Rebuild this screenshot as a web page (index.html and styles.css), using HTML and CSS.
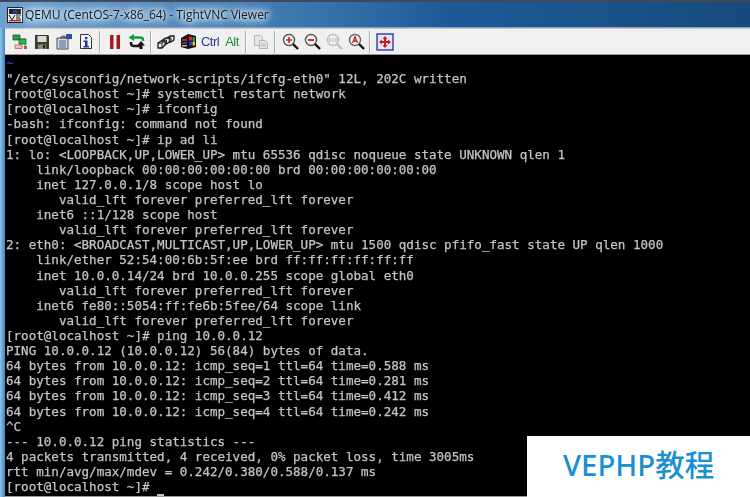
FILE: index.html
```html
<!DOCTYPE html>
<html lang="en">
<head>
<meta charset="utf-8">
<title>QEMU (CentOS-7-x86_64) - TightVNC Viewer</title>
<link rel="stylesheet" href="styles.css">
</head>
<body>
<div class="window">
  <header class="titlebar">
    <svg class="app-icon" width="16" height="16" viewBox="0 0 16 16">
      <rect x=".5" y=".5" width="15" height="15" fill="#e8e8e8" stroke="#222"/>
      <rect x="2" y="2" width="12" height="5" fill="#222"/>
      <rect x="6" y="3" width="4" height="3" fill="#2438c8"/>
      <path d="M2 8l3 5 3-5M9 8h5M9 10h4M9 12h5" stroke="#222" fill="none"/>
      <rect x="2" y="13" width="12" height="1.5" fill="#c03030"/>
    </svg>
    <span class="title-text">QEMU (CentOS-7-x86_64) - TightVNC Viewer</span>
  </header>
  <div class="client">
    <nav class="toolbar">
      <span class="tool"><svg width="16" height="16" viewBox="0 0 16 16"><path d="M3 5h10v7" fill="none" stroke="#8a8a40"/><rect x="1" y="1" width="7" height="5" fill="#19a83a" stroke="#222" stroke-width=".6"/><rect x="7" y="5" width="7" height="5" fill="#22c048" stroke="#222" stroke-width=".6"/><rect x="3" y="11" width="7" height="3.5" fill="#e8c8c0" stroke="#c03030" stroke-width=".6"/><rect x="12" y="12" width="3" height="3" fill="#77773a"/></svg></span>
      <span class="tool"><svg width="16" height="16" viewBox="0 0 16 16"><path d="M1 1h13l1 1v13H1z" fill="#3d3d2e"/><rect x="3.5" y="2" width="9" height="6" fill="#dcdcd2"/><rect x="4" y="10.5" width="8" height="4.5" fill="#8b8b6e"/><rect x="9" y="11" width="2" height="3.5" fill="#222"/></svg></span>
      <span class="tool"><svg width="17" height="17" viewBox="0 0 17 17"><path d="M1 5h11v11H1z" fill="#dcdce0" stroke="#444"/><path d="M3 8h7M3 10h7M3 12h7M3 14h7" stroke="#3a5a90"/><path d="M4 5l2-2h3l1 2z" fill="#888" stroke="#333" stroke-width=".6"/><rect x="10" y="1" width="6" height="5" fill="#2a4fa8"/></svg></span>
      <span class="tool"><svg width="16" height="17" viewBox="0 0 16 17"><path d="M2.5 1.500h8l3 3v11h-11z" fill="#f6f6f6" stroke="#333"/><rect x="7" y="4" width="2.400" height="2.200" fill="#1c2fa8"/><path d="M5.500 7.500h4v5.500h1.500v1.500h-5.500v-1.500h1.500v-4h-1.500z" fill="#1c2fa8"/></svg></span>
      <i class="sep"></i>
      <span class="tool"><svg width="12" height="14" viewBox="0 0 12 14"><rect x="1" y="0" width="3.500" height="14" fill="#a51c1c"/><rect x="7.500" y="0" width="3.500" height="14" fill="#a51c1c"/></svg></span>
      <span class="tool"><svg width="18" height="16" viewBox="0 0 18 16"><path d="M15 7V5.500Q15 3.500 12 3.500H5" stroke="#149a3a" stroke-width="2.400" fill="none"/><path d="M0.500 3.500L6 0V7z" fill="#149a3a"/><path d="M3 8v1.500Q3 12 6 12H13" stroke="#111" stroke-width="2.400" fill="none"/><path d="M13 7l4 4.500h-2.500V15h-3V11.500H9z" fill="#111"/></svg></span>
      <i class="sep"></i>
      <span class="tool"><svg width="18" height="14" viewBox="0 0 18 14"><g fill="#ececec" stroke="#1a1a1a" stroke-width="1.300" stroke-linejoin="round"><path d="M10 3l3-2h4v4l-3 2h-4z"/><path d="M5.500 5l3-2h4v4l-3 2h-4z"/><path d="M1 8l3-2h4v4l-3 3H1z"/></g><path d="M1 8h4v5M5 8l3-2M5.500 5h4v4M10 3h4v4" stroke="#1a1a1a" fill="none"/></svg></span>
      <span class="tool"><svg width="17" height="17" viewBox="0 0 17 17"><path d="M1 5l7-4v15l-7-2z" fill="#111"/><path d="M2 6h5v2H2z" fill="#d02020"/><path d="M2 9h5v2H2z" fill="#2040c0"/><path d="M2 12h5v1.500H2z" fill="#d8c020"/><path d="M8 1l8 2v11l-8 2z" fill="#111"/><rect x="9" y="3.500" width="3" height="4" fill="#e02020"/><rect x="12.500" y="4" width="2.500" height="4" fill="#18a030"/><rect x="9" y="8.500" width="3" height="4" fill="#2040d0"/><rect x="12.500" y="8.500" width="2.500" height="4" fill="#e0c820"/></svg></span>
      <span class="tool key key-ctrl">Ctrl</span>
      <span class="tool key key-alt">Alt</span>
      <i class="sep"></i>
      <span class="tool"><svg width="16" height="16" viewBox="0 0 16 16"><g fill="#e6e6e6" stroke="#b4b4b4"><path d="M1.500 1.500h6l2 2v8h-8z"/><path d="M6.500 6.500h6l2 2v6h-8z"/></g><path d="M8 10h5M8 12h5" stroke="#bbb"/></svg></span>
      <i class="sep"></i>
      <span class="tool"><svg width="17" height="17" viewBox="0 0 17 17"><circle cx="7" cy="7" r="5.500" fill="#f4f4f4" stroke="#555" stroke-width="1.400"/><path d="M4 7h6M7 4v6" stroke="#c02020" stroke-width="1.600"/><path d="M11 11l5 5" stroke="#111" stroke-width="2.400"/></svg></span>
      <span class="tool"><svg width="17" height="17" viewBox="0 0 17 17"><circle cx="7" cy="7" r="5.500" fill="#f4f4f4" stroke="#555" stroke-width="1.400"/><path d="M4 7h6" stroke="#c02020" stroke-width="1.800"/><path d="M11 11l5 5" stroke="#111" stroke-width="2.400"/></svg></span>
      <span class="tool"><svg width="17" height="17" viewBox="0 0 17 17"><circle cx="7" cy="7" r="5.500" fill="#eee" stroke="#bbb" stroke-width="1.400"/><path d="M4 5v4M7 5v4M10 5v4" stroke="#bbb" stroke-width="1.200"/><path d="M11 11l5 5" stroke="#c0c0c0" stroke-width="2.400"/></svg></span>
      <span class="tool"><svg width="17" height="17" viewBox="0 0 17 17"><circle cx="7" cy="7" r="5.500" fill="#f4f4f4" stroke="#666" stroke-width="1.400"/><path d="M4.500 10l2.500-6 2.500 6M5.500 8h3" stroke="#c02020" stroke-width="1.300" fill="none"/><path d="M11 11l5 5" stroke="#111" stroke-width="2.400"/></svg></span>
      <i class="sep"></i>
      <span class="tool"><svg width="18" height="18" viewBox="0 0 18 18"><rect x="1" y="1" width="16" height="16" fill="#e4e6f8" stroke="#3844a8" stroke-width="1.500"/><g fill="#c81e1e"><path d="M9 3l2.500 3h-5zM9 15l2.500-3h-5zM3 9l3-2.500v5zM15 9l-3-2.500v5z"/><rect x="8" y="6" width="2" height="6"/><rect x="6" y="8" width="6" height="2"/></g></svg></span>
    </nav>
    <div class="terminal">
      <div class="line tilde">~</div>
      <div class="line first">"/etc/sysconfig/network-scripts/ifcfg-eth0" 12L, 202C written</div>
      <div class="line">[root@localhost ~]# systemctl restart network</div>
      <div class="line">[root@localhost ~]# ifconfig</div>
      <div class="line">-bash: ifconfig: command not found</div>
      <div class="line">[root@localhost ~]# ip ad li</div>
      <div class="line">1: lo: &lt;LOOPBACK,UP,LOWER_UP&gt; mtu 65536 qdisc noqueue state UNKNOWN qlen 1</div>
      <div class="line">    link/loopback 00:00:00:00:00:00 brd 00:00:00:00:00:00</div>
      <div class="line">    inet 127.0.0.1/8 scope host lo</div>
      <div class="line">       valid_lft forever preferred_lft forever</div>
      <div class="line">    inet6 ::1/128 scope host</div>
      <div class="line">       valid_lft forever preferred_lft forever</div>
      <div class="line">2: eth0: &lt;BROADCAST,MULTICAST,UP,LOWER_UP&gt; mtu 1500 qdisc pfifo_fast state UP qlen 1000</div>
      <div class="line">    link/ether 52:54:00:6b:5f:ee brd ff:ff:ff:ff:ff:ff</div>
      <div class="line">    inet 10.0.0.14/24 brd 10.0.0.255 scope global eth0</div>
      <div class="line">       valid_lft forever preferred_lft forever</div>
      <div class="line">    inet6 fe80::5054:ff:fe6b:5fee/64 scope link</div>
      <div class="line">       valid_lft forever preferred_lft forever</div>
      <div class="line">[root@localhost ~]# ping 10.0.0.12</div>
      <div class="line">PING 10.0.0.12 (10.0.0.12) 56(84) bytes of data.</div>
      <div class="line">64 bytes from 10.0.0.12: icmp_seq=1 ttl=64 time=0.588 ms</div>
      <div class="line">64 bytes from 10.0.0.12: icmp_seq=2 ttl=64 time=0.281 ms</div>
      <div class="line">64 bytes from 10.0.0.12: icmp_seq=3 ttl=64 time=0.412 ms</div>
      <div class="line">64 bytes from 10.0.0.12: icmp_seq=4 ttl=64 time=0.242 ms</div>
      <div class="line">^C</div>
      <div class="line">--- 10.0.0.12 ping statistics ---</div>
      <div class="line">4 packets transmitted, 4 received, 0% packet loss, time 3005ms</div>
      <div class="line">rtt min/avg/max/mdev = 0.242/0.380/0.588/0.137 ms</div>
      <div class="line">[root@localhost ~]#<i class="cursor"></i></div>
    </div>
  </div>
  <div class="watermark">VEPHP教程</div>
</div>
</body>
</html>
```
FILE: styles.css
```css
* { box-sizing: border-box; }
html, body { margin: 0; padding: 0; }
body { background: #1a4a80; overflow: hidden; }

.window {
  position: relative;
  width: 750px;
  height: 497px;
  display: flex;
  flex-direction: column;
  overflow: hidden;
  background: linear-gradient(90deg, #8fc4ea 0, #3f86c0 5px, #1c558f 5px);
}

.titlebar {
  height: 28px;
  flex: none;
  display: flex;
  align-items: center;
  gap: 2px;
  padding: 1px 0 0 7px;
  border-top: 2px solid #3c4a60;
  background: linear-gradient(90deg, #6f9fcc 0, #3c76ae 40%, #1d5a95 60%, #174a7d 100%);
  border-bottom: 1px solid #7da4c8;
}

.app-icon { flex: none; filter: blur(.3px); }

.title-text {
  font: 12px/16px "Open Sans", "Liberation Sans", sans-serif;
  color: #0c1a26;
  text-shadow: 0 0 5px #fff, 0 0 8px #fff, 0 0 12px #fff, 0 0 16px #dbe8f4;
  filter: blur(.25px);
}

.client {
  flex: 1;
  min-height: 0;
  margin-left: 5px;
  display: flex;
  flex-direction: column;
  background: #000;
}

.toolbar {
  height: 27px;
  flex: none;
  display: flex;
  align-items: center;
  padding-left: 4px;
  background: #f0f0f0;
  border-top: 1px solid #c8c8c8;
  border-bottom: 1px solid #9a9a9a;
}

.tool {
  width: 22px;
  height: 22px;
  flex: none;
  display: flex;
  align-items: center;
  justify-content: center;
  filter: blur(.35px);
}

.key {
  font: 13px/22px "Liberation Sans", sans-serif;
  letter-spacing: -0.5px;
}
.key-ctrl { color: #32329c; }
.key-alt { color: #1f8f36; }

.sep {
  width: 1px;
  height: 22px;
  flex: none;
  margin: 0 4px 0 2px;
  background: #a8a8a8;
  box-shadow: 1px 0 0 #fff;
}

.terminal {
  flex: 1;
  min-height: 0;
  padding-left: 1px;
  background: #000;
  color: #c4c4c4;
  font: 12.55px/15.11px "DejaVu Sans Mono", monospace;
  -webkit-text-stroke: .25px #c4c4c4;
  overflow: hidden;
  border-bottom: 1px solid #9a9a9a;
  filter: blur(.4px);
}

.line { white-space: pre; height: 15.11px; width: max-content; }
.first { margin-top: 1px; }
.tilde { color: #2a3cd0; font-weight: bold; -webkit-text-stroke: 0; }

.cursor {
  display: inline-block;
  width: 7px;
  height: 2px;
  margin-left: 7px;
  vertical-align: -4.5px;
  background: #c4c4c4;
}

.watermark {
  position: absolute;
  right: 0;
  bottom: 0;
  width: 223px;
  height: 61px;
  padding-left: 36px;
  background: #fff;
  color: #1a8fd1;
  font: 500 29.4px/59px "Noto Sans", "Noto Sans CJK SC", sans-serif;
  white-space: nowrap;
}
```
